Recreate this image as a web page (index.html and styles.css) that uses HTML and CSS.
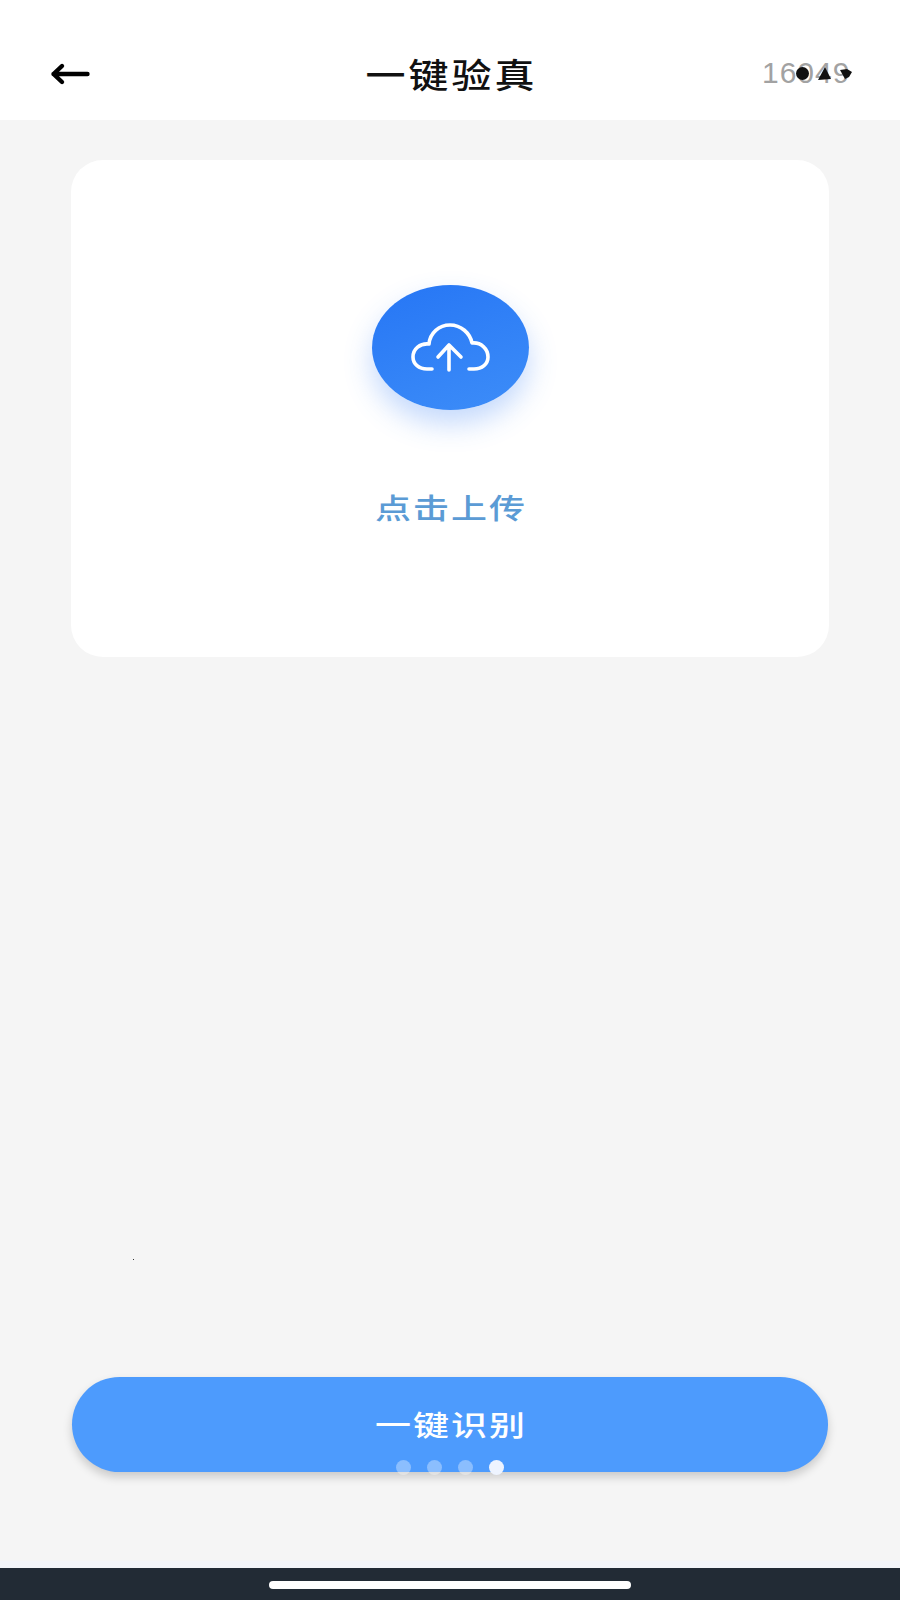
FILE: index.html
```html
<!DOCTYPE html>
<html lang="zh-CN">
<head>
<meta charset="utf-8">
<title>一键验真</title>
<link rel="stylesheet" href="styles.css">
</head>
<body>
<div class="app">
  <header class="header">
    <svg class="back" viewBox="0 0 40 24" width="40" height="24" aria-hidden="true"><path d="M37.500 12H3.500M12 4 3.500 12l8.500 8" fill="none" stroke="#000" stroke-width="4.400" stroke-linecap="round" stroke-linejoin="round"/></svg>
    <h1 class="title">一键验真</h1>
    <div class="status">
      <span class="status-time">16049</span>
      <div class="status-icons">
        <span class="status-dot"></span>
        <svg width="14" height="13" viewBox="0 0 14 13" aria-hidden="true"><path d="M8 0 14 12 1 13Z" fill="#111"/></svg>
        <svg width="13" height="11" viewBox="0 0 13 11" aria-hidden="true"><path d="M1 2 8 1l5 3-3 5-4 2Z" fill="#111"/></svg>
      </div>
    </div>
  </header>
  <main class="main">
    <section class="card">
      <div class="upload-circle">
        <svg viewBox="0 0 80 56" width="80" height="56" aria-hidden="true"><g fill="none" stroke="#fff" stroke-width="3.600" stroke-linecap="round" stroke-linejoin="round"><path d="M22 49H17C9 49 3 44 3 37C3 29 10 23 19 24C20 13 29 5 40 5C51 5 60 13 62 23C71 22 78 29 78 37C78 44 72 49 64 49H59"/><path d="M39 50V25M28 37 39 25 51 37"/></g></svg>
      </div>
      <p class="upload-label">点击上传</p>
    </section>
    <span class="speck"></span>
    <button class="action" type="button"><span class="action-label">一键识别</span>
      <span class="dots"><i class="dot"></i><i class="dot"></i><i class="dot"></i><i class="dot dot-active"></i></span>
    </button>
  </main>
  <footer class="navbar"><span class="handle"></span></footer>
</div>
</body>
</html>
```
FILE: styles.css
```css
* { box-sizing: border-box; }
html, body { margin: 0; padding: 0; }
body { font-family: "Noto Sans CJK SC", "Liberation Sans", sans-serif; background: #f5f5f5; }
.app { width: 900px; height: 1600px; display: flex; flex-direction: column; overflow: hidden; }

.header { position: relative; height: 120px; flex: none; background: #fff; display: flex; align-items: center; justify-content: center; padding-top: 25px; }
.back { position: absolute; left: 50px; top: 62px; }
.title { margin: 0; font-size: 40px; line-height: 1; font-weight: 500; color: #111; letter-spacing: 3px; margin-right: -3px; transform: scaleY(0.86); }
.status { position: absolute; left: 762px; top: 57px; width: 96px; height: 32px; }
.status-time { font-family: "Liberation Sans", sans-serif; font-size: 30px; line-height: 32px; color: #a2a2a2; letter-spacing: 1px; }
.status-icons { position: absolute; left: 34px; top: 10px; display: flex; align-items: center; gap: 8px; }
.status-dot { width: 13px; height: 13px; border-radius: 50%; background: #111; }

.main { position: relative; flex: 1; display: flex; flex-direction: column; align-items: center; padding: 40px 0 96px; }
.card { width: 758px; height: 497px; background: #fff; border-radius: 32px; display: flex; flex-direction: column; align-items: center; padding-top: 125px; }
.upload-circle { width: 157px; height: 125px; border-radius: 50%; background: linear-gradient(160deg, #2676f5, #3d8df8); box-shadow: 0 14px 28px rgba(60, 130, 245, 0.3); display: flex; align-items: center; justify-content: center; }
.upload-label { margin: 72px -2px 0 0; font-size: 36px; line-height: 48px; font-weight: 500; color: #5b9bd5; letter-spacing: 2px; transform: scaleY(0.8); }
.speck { position: absolute; left: 133px; top: 1139px; width: 1px; height: 1px; background: #333; }
.action { position: relative; margin-top: auto; width: 756px; height: 95px; border: 0; border-radius: 48px; background: #4d9bfd; box-shadow: 0 5px 10px rgba(0, 0, 0, 0.18); color: #fff; font: inherit; font-size: 36px; font-weight: 500; letter-spacing: 2px; padding: 0 0 4px 2px; }
.action-label { display: inline-block; transform: scaleY(0.8); }
.dots { position: absolute; left: 324px; top: 83px; display: flex; gap: 16px; }
.dot { width: 15px; height: 15px; border-radius: 50%; background: rgba(255, 255, 255, 0.35); }
.dot-active { background: #eef4ff; }
.navbar { height: 32px; flex: none; background: #222b35; box-shadow: 0 -7px 0 #f3f5f9; display: flex; justify-content: center; padding-top: 13px; }
.handle { width: 362px; height: 8px; border-radius: 4px; background: #fff; }
```
